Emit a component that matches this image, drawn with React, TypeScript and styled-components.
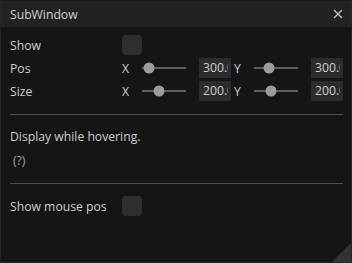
import styled, { createGlobalStyle } from 'styled-components';
import { X } from 'lucide-react';

const GlobalStyle = createGlobalStyle`
  html, body {
    margin: 0;
    padding: 0;
    background: #151515;
  }
  body {
    font-family: "Open Sans", "Noto Sans", sans-serif;
  }
`;

const Window = styled.div`
  position: relative;
  width: 352px;
  height: 263px;
  box-sizing: border-box;
  background: #151515;
  border: 1px solid #252525;
  border-top: none;
  overflow: hidden;
  color: #cfcfcf;
  font-size: 12.2px;
`;

const TitleBar = styled.div`
  height: 27px;
  background: #222222;
  display: flex;
  align-items: center;
  justify-content: space-between;
  padding: 0 6px 0 9px;
  border-top: 1px solid #1a1a1a;
  box-sizing: border-box;
`;

const Title = styled.span`
  color: #d2d2d2;
  font-size: 12.2px;
`;

const CloseButton = styled.button`
  background: none;
  border: none;
  padding: 0;
  color: #c4c4c4;
  display: flex;
  align-items: center;
  cursor: pointer;
`;

const Body = styled.div`
  padding: 8px 8px 0 9px;
`;

const Row = styled.div<{ $top?: number }>`
  display: flex;
  align-items: center;
  height: 20px;
  margin-top: ${p => p.$top ?? 0}px;
  margin-bottom: 3px;
`;

const Label = styled.span`
  width: 112px;
  flex-shrink: 0;
  white-space: nowrap;
`;

const Checkbox = styled.div`
  width: 20px;
  height: 20px;
  border-radius: 4px;
  background: #2f2f2f;
`;

const AxisLabel = styled.span`
  width: 20px;
  flex-shrink: 0;
`;

const Track = styled.div`
  position: relative;
  width: 44px;
  height: 2px;
  background: #5e5e5e;
  margin-right: 13px;
`;

const Knob = styled.div`
  position: absolute;
  top: 50%;
  width: 11px;
  height: 11px;
  border-radius: 50%;
  background: #9c9c9c;
  transform: translate(-50%, -50%);
`;

const ValueBox = styled.div<{ $gap?: number }>`
  display: flex;
  width: 32px;
  height: 20px;
  background: #2c2c2c;
  line-height: 20px;
  padding: 0 3px 0 4px;
  box-sizing: border-box;
  margin-right: ${p => p.$gap ?? 0}px;
  color: #cfcfcf;
`;

const ValueText = styled.span`
  flex: 1;
  overflow: hidden;
  white-space: nowrap;
`;

const Separator = styled.div<{ $top: number }>`
  height: 1px;
  background: #4e4e4e;
  margin-top: ${p => p.$top}px;
`;

const Note = styled.div`
  margin-top: 12px;
  line-height: 20px;
`;

const Help = styled.div`
  margin-top: 4px;
  margin-left: 3px;
  line-height: 20px;
  color: #a4a4a4;
`;

const Grip = styled.div`
  position: absolute;
  right: 0;
  bottom: 0;
  width: 19px;
  height: 19px;
  background: #333333;
  clip-path: polygon(100% 0, 100% 100%, 0 100%);
`;

interface Vec2Props {
  label: string;
  x: number;
  y: number;
  kx: number;
  ky: number;
}

const Vec2Row = ({ label, x, y, kx, ky }: Vec2Props) => (
  <Row>
    <Label>{label}</Label>
    <AxisLabel>X</AxisLabel>
    <Track>
      <Knob style={{ left: `${kx}px` }} />
    </Track>
    <ValueBox $gap={3}>
      <ValueText>{x.toFixed(1)}</ValueText>
    </ValueBox>
    <AxisLabel>Y</AxisLabel>
    <Track>
      <Knob style={{ left: `${ky}px` }} />
    </Track>
    <ValueBox>
      <ValueText>{y.toFixed(1)}</ValueText>
    </ValueBox>
  </Row>
);

export default function App() {
  return (
    <>
      <GlobalStyle />
      <Window>
        <TitleBar>
          <Title>SubWindow</Title>
          <CloseButton>
            <X size={14} strokeWidth={2.2} />
          </CloseButton>
        </TitleBar>
        <Body>
          <Row>
            <Label>Show</Label>
            <Checkbox />
          </Row>
          <Vec2Row label="Pos" x={300} y={300} kx={7} ky={15} />
          <Vec2Row label="Size" x={200} y={200} kx={17} ky={17} />
          <Separator $top={13} />
          <Note>Display while hovering.</Note>
          <Help>(?)</Help>
          <Separator $top={12} />
          <Row $top={12}>
            <Label>Show mouse pos</Label>
            <Checkbox />
          </Row>
        </Body>
        <Grip />
      </Window>
    </>
  );
}
